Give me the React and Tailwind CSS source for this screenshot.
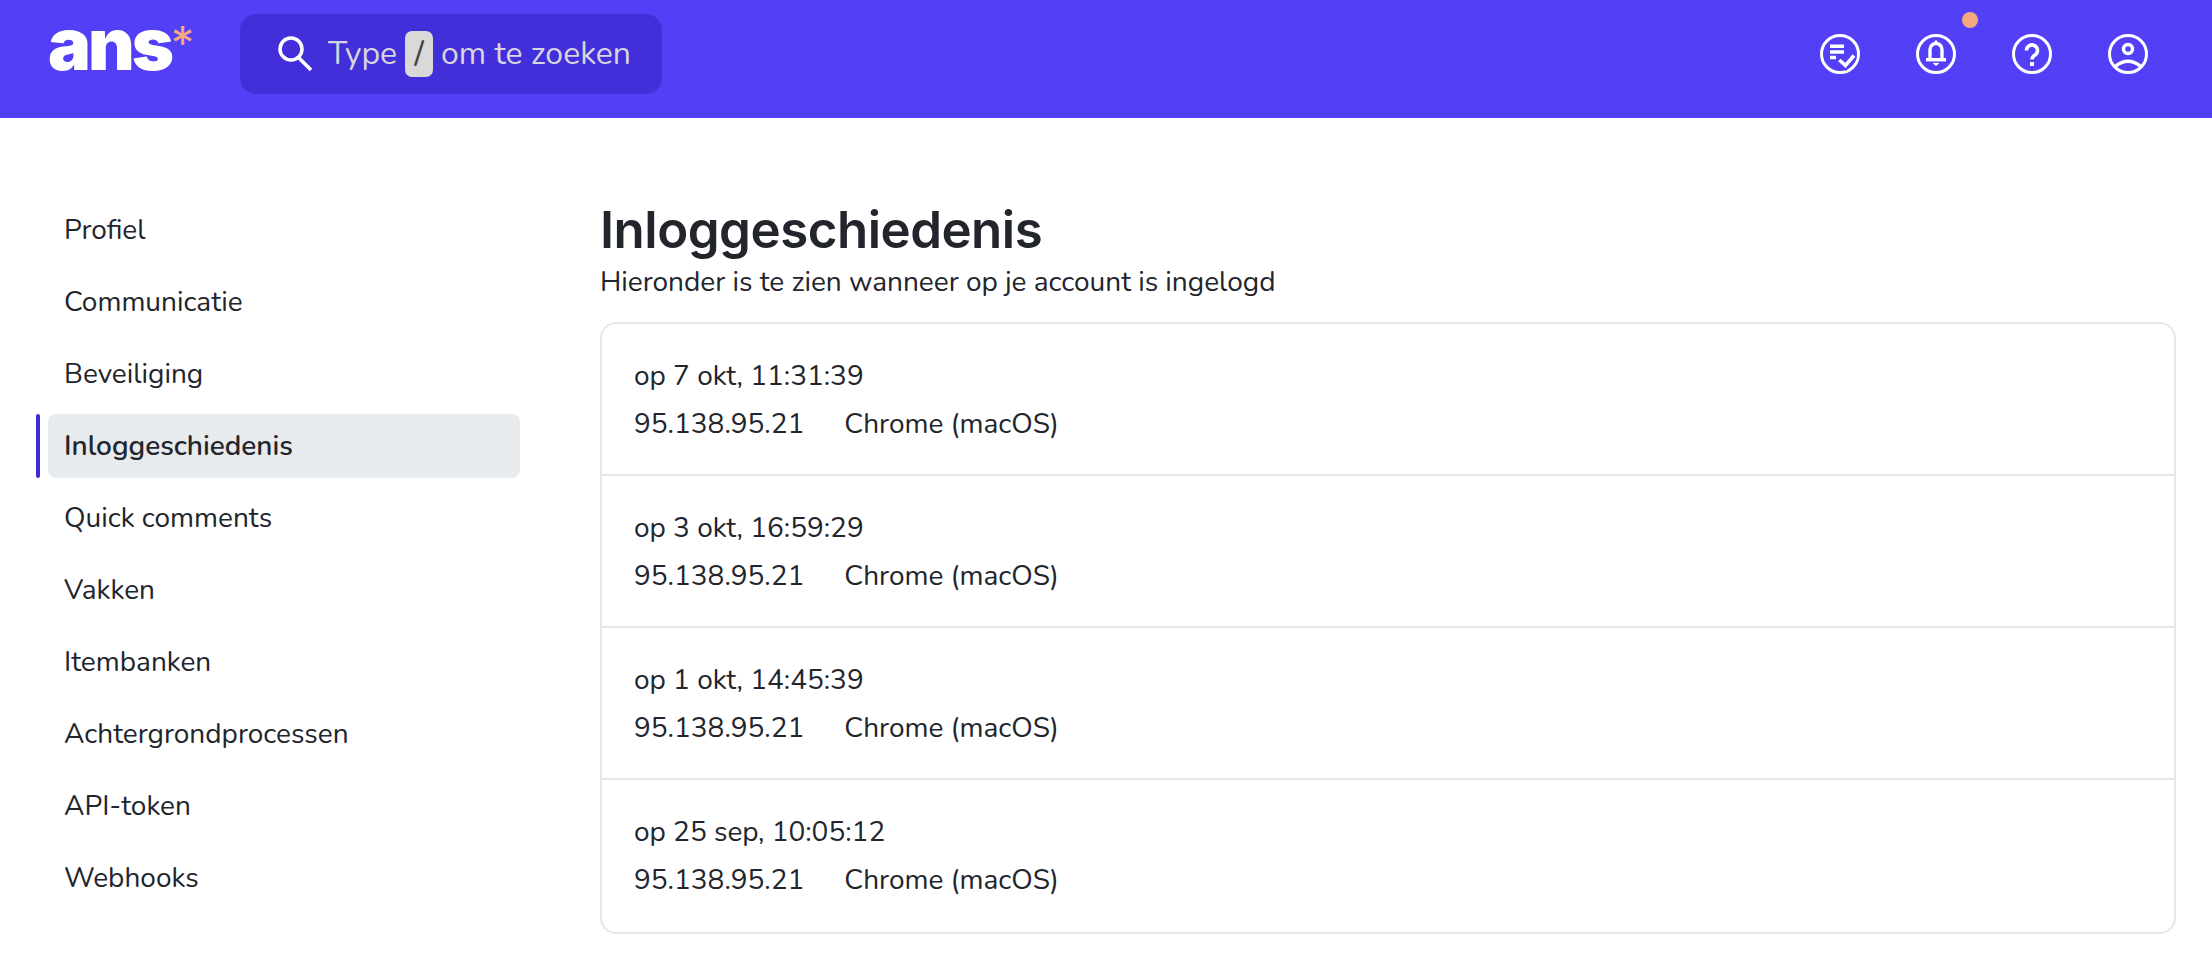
import React from "react";

const menuItems = ["Profiel", "Communicatie", "Beveiliging", "Inloggeschiedenis", "Quick comments", "Vakken", "Itembanken", "Achtergrondprocessen", "API-token", "Webhooks"];

const logins = [
  { date: "op 7 okt, 11:31:39", rowClass: "h-[150px] pt-[2px]" },
  { date: "op 3 okt, 16:59:29", rowClass: "h-[152px] pt-[2px] border-t-2 border-[#e6e6e6]" },
  { date: "op 1 okt, 14:45:39", rowClass: "h-[152px] pt-[2px] border-t-2 border-[#e6e6e6]" },
  { date: "op 25 sep, 10:05:12", rowClass: "h-[154px] border-t-2 border-[#e6e6e6]" },
];

const RingIcon = ({ children }) => (
  <svg width="42" height="42" viewBox="0 0 42 42" fill="none" stroke="white" strokeWidth="3">
    <circle cx="21" cy="21" r="18.5" />
    {children}
  </svg>
);

const App = () => {
  return (
    <div className="min-h-[980px] bg-white font-['Nunito','Noto_Sans','Open_Sans',sans-serif] text-[#22252c]">
      {/* Header */}
      <header className="flex h-[118px] items-start bg-[#5340f6] pl-[48px] pr-[63px] pt-[14px]">
        <div className="relative mr-[66px] h-[80px] w-[126px]">
          <span className="font-['Inter',sans-serif] text-[72px] leading-[60px] font-black tracking-[-3px] text-white">ans</span>
          <span className="absolute left-[123px] top-[4px] font-['Inter',sans-serif] text-[46px] leading-[50px] text-[#f4a97f]">*</span>
        </div>
        <div className="flex h-[80px] w-[422px] items-center rounded-[16px] bg-[#432fd9] pl-[38px]">
          <svg width="36" height="36" viewBox="0 0 36 36" fill="none" stroke="white" strokeWidth="3.5" className="mr-[14px]">
            <circle cx="13" cy="13" r="11" />
            <path d="M21 22l12 12" />
          </svg>
          <span className="text-[32px] text-[#d6d6e0]">Type</span>
          <span className="mx-[8px] flex h-[46px] w-[28px] items-center justify-center rounded-[7px] bg-[#d9d9d9] text-[32px] font-medium text-[#444]">/</span>
          <span className="text-[32px] text-[#d6d6e0]">om te zoeken</span>
        </div>
        <div className="relative ml-auto mt-[19px] flex gap-[54px]">
          <RingIcon>
            <path d="M11 13.3h14M11 19h14M11 24.5h6" strokeWidth="3.6" />
            <path d="M20.3 27l6.2 5.4L35 22.5" stroke="#5340f6" strokeWidth="8" />
            <path d="M20.3 27l6.2 5.4L35 22.5" strokeWidth="3.6" />
          </RingIcon>
          <RingIcon>
            <path d="M15 26v-9.5a6 6 0 0 1 12 0V26" strokeWidth="3.4" />
            <path d="M11 26.7h20" strokeWidth="3.4" />
            <path d="M21 7.5v3" strokeWidth="2.6" />
            <path d="M18.4 30.4h5.2l-2.6 2z" fill="white" strokeWidth="1" />
          </RingIcon>
          <RingIcon>
            <path d="M15.5 17.5a5.5 5.5 0 1 1 8.6 4.5c-2 1.3-3.1 2-3.1 4.5" strokeWidth="3.6" />
            <path d="M21 29v4" strokeWidth="4" />
          </RingIcon>
          <RingIcon>
            <circle cx="21" cy="16" r="4.5" strokeWidth="3.5" />
            <path d="M8 33.5Q21 23 34 33.5" strokeWidth="3.4" />
          </RingIcon>
          <span className="absolute left-[143px] top-[-21px] h-[16px] w-[16px] rounded-full bg-[#f4a97f]" />
        </div>
      </header>

      <div className="flex">
        {/* Sidebar */}
        <nav className="w-[600px] shrink-0 pl-[36px] pt-[76px]">
          <ul className="flex flex-col">
            {menuItems.map((item) => {
              const active = item === "Inloggeschiedenis";
              return (
                <li key={item} className="flex h-[72px] items-center">
                  <span className={`mr-[8px] h-[64px] w-[4px] rounded-sm ${active ? "bg-[#3d2bd6]" : ""}`} />
                  <span className={`flex h-[64px] w-[472px] items-center rounded-[8px] pl-[16px] text-[28px] ${active ? "bg-[#e8ebee] font-semibold" : ""}`}>
                    {item}
                  </span>
                </li>
              );
            })}
          </ul>
        </nav>

        {/* Content */}
        <main className="flex-1 pr-[36px] pt-[78px]">
          <h1 className="font-['Inter',sans-serif] text-[51px] leading-[68px] font-semibold tracking-[-0.5px]">Inloggeschiedenis</h1>
          <p className="text-[28px] leading-[36px]">Hieronder is te zien wanneer op je account is ingelogd</p>
          <div className="mt-[22px] rounded-[16px] border-2 border-[#e6e6e6]">
            {logins.map((login) => (
              <div key={login.date} className={`flex flex-col justify-center gap-[12px] pl-[32px] text-[28px] leading-[36px] ${login.rowClass}`}>
                <div>{login.date}</div>
                <div className="flex gap-[40px]">
                  <span>95.138.95.21</span>
                  <span>Chrome (macOS)</span>
                </div>
              </div>
            ))}
          </div>
        </main>
      </div>
    </div>
  );
};

export default App;
